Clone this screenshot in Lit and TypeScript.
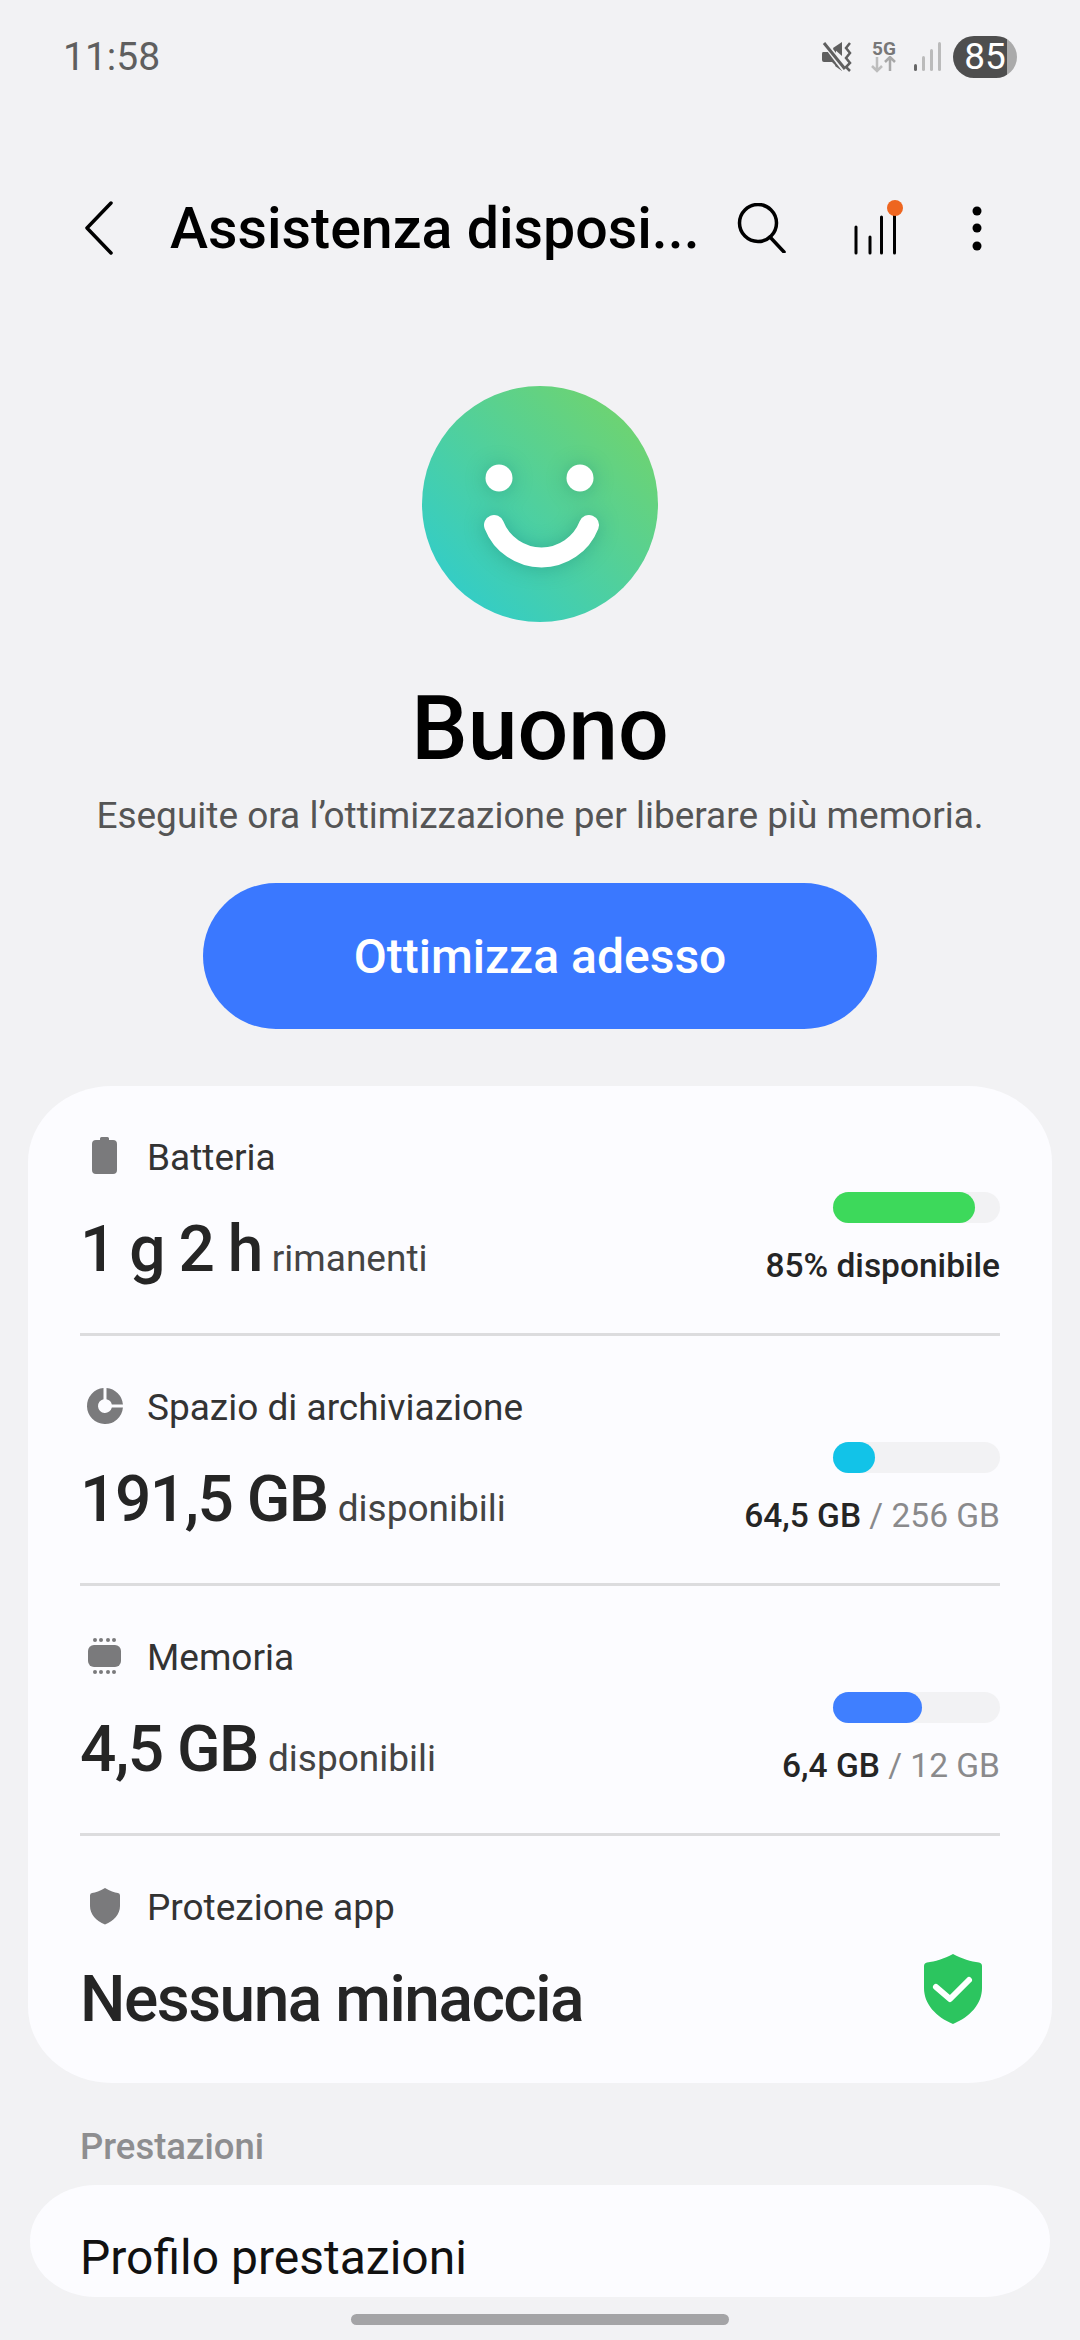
import { LitElement, css, html, svg } from 'lit';
import { customElement } from 'lit/decorators.js';

const icons = {
  battery: svg`<path d="M9 1.5Q9 0 10.500 0H16.500Q18 0 18 1.500V3H22Q26 3 26 7V33Q26 37 22 37H5Q1 37 1 33V7Q1 3 5 3H9Z" transform="translate(5 0)"/>`,
  pie: svg`<path d="M17.500 1.060A18 18 0 1 0 36.940 20.500H25.840A7 7 0 1 1 17.500 12.160Z"/><path d="M20.500 1.060A18 18 0 0 1 36.940 17.500H25.840A7 7 0 0 0 20.500 12.160Z"/>`,
  chip: svg`<rect x="2" y="8" width="33" height="22" rx="6"/><circle cx="9" cy="3" r="2"/><circle cx="15" cy="3" r="2"/><circle cx="22" cy="3" r="2"/><circle cx="28" cy="3" r="2"/><circle cx="9" cy="35" r="2"/><circle cx="15" cy="35" r="2"/><circle cx="22" cy="35" r="2"/><circle cx="28" cy="35" r="2"/>`,
  shield: svg`<path transform="translate(4 1)" d="M15 0C20 3 24.500 4.500 28 5Q30 5.300 30 7.500V18C30 26 24 33 15 36.500C6 33 0 26 0 18V7.500Q0 5.300 2 5C5.500 4.500 10 3 15 0Z"/>`,
};

const rows = [
  { icon: icons.battery, label: 'Batteria', value: '1 g 2 h', unit: 'rimanenti', pct: 85, color: '#3dd95b', used: '85% disponibile', total: '' },
  { icon: icons.pie, label: 'Spazio di archiviazione', value: '191,5 GB', unit: 'disponibili', pct: 25, color: '#12c3e8', used: '64,5 GB', total: ' / 256 GB' },
  { icon: icons.chip, label: 'Memoria', value: '4,5 GB', unit: 'disponibili', pct: 53, color: '#3f7fff', used: '6,4 GB', total: ' / 12 GB' },
];

@customElement('app-root')
export class AppRoot extends LitElement {
  static get styles() {
    return css`
      :host {
        display: flex;
        flex-direction: column;
        width: 1080px;
        height: 2340px;
        overflow: hidden;
        background: #f2f2f4;
        font-family: Roboto, sans-serif;
        color: #252525;
      }
      .status {
        display: flex;
        align-items: center;
        height: 42px;
        margin-top: 36px;
        padding: 0 63px;
        color: #5f5f5f;
        font-size: 39px;
      }
      .status-right {
        display: flex;
        align-items: center;
        margin-left: auto;
      }
      .net {
        display: flex;
        flex-direction: column;
        align-items: center;
        width: 30px;
        margin-left: 17px;
        color: #777;
        font-size: 19px;
        font-weight: 700;
        line-height: 14px;
      }
      .bars {
        margin-left: 15px;
      }
      .pill {
        width: 64px;
        height: 42px;
        border-radius: 21px;
        margin-left: 12px;
        background: linear-gradient(90deg, #4e4e4e 84%, #aaaaaa 84%);
        color: #fff;
        font-size: 37px;
        line-height: 42px;
        text-align: center;
      }
      .appbar {
        display: flex;
        align-items: center;
        height: 80px;
        margin-top: 110px;
        padding-left: 84px;
        color: #000;
      }
      .back {
        width: 30px;
        height: 54px;
      }
      .title {
        margin-left: 56px;
        width: 540px;
        font-size: 57.300px;
        font-weight: 500;
        white-space: nowrap;
      }
      .search {
        width: 50px;
        height: 50px;
        margin-left: 27px;
      }
      .signal {
        width: 50px;
        height: 56px;
        margin-left: 66px;
      }
      .dots {
        width: 14px;
        height: 56px;
        margin-left: 67px;
      }
      .hero {
        display: flex;
        flex-direction: column;
        align-items: center;
        padding-top: 118px;
      }
      .smile {
        display: block;
        width: 236px;
        height: 236px;
      }
      .face {
        filter: drop-shadow(0 1px 10px rgba(16, 120, 110, 0.38));
      }
      h1 {
        margin: 57px 0 0;
        font-size: 89.500px;
        font-weight: 500;
        line-height: 100px;
        color: #000;
      }
      .hint {
        margin-top: 12px;
        font-size: 37px;
        line-height: 50px;
        color: #555;
      }
      .cta {
        width: 674px;
        height: 146px;
        margin-top: 42px;
        border-radius: 73px;
        background: #3a78ff;
        color: #fff;
        font-size: 48px;
        font-weight: 500;
        line-height: 148px;
        text-align: center;
      }
      .card {
        margin: 57px 28px 0;
        padding: 0 52px;
        border-radius: 84px / 76px;
        background: #fcfcff;
      }
      .row {
        display: flex;
        justify-content: space-between;
        height: 250px;
        box-sizing: border-box;
        border-bottom: 3px solid #dcdcde;
        padding-top: 46px;
      }
      .row:last-child {
        height: 247px;
        border-bottom: 0;
      }
      .label {
        display: flex;
        align-items: center;
        height: 50px;
        font-size: 37px;
        color: #333;
      }
      .icon {
        width: 40px;
        height: 40px;
        margin-left: 6px;
        margin-right: 21px;
        fill: #7a7a7c;
      }
      .value {
        margin-top: 30px;
        line-height: 76px;
        font-size: 64px;
        font-weight: 500;
        letter-spacing: -1.500px;
        white-space: nowrap;
      }
      .unit {
        font-size: 37px;
        font-weight: 400;
        letter-spacing: 0;
        margin-left: 10px;
        color: #444;
      }
      .stats {
        display: flex;
        flex-direction: column;
        align-items: flex-end;
        padding-top: 60px;
      }
      .track {
        width: 167px;
        height: 31px;
        border-radius: 16px;
        background: #f2f2f4;
      }
      .fill {
        height: 100%;
        border-radius: 16px;
      }
      .caption {
        margin-top: 21px;
        font-size: 33.500px;
        font-weight: 500;
        line-height: 44px;
        white-space: nowrap;
      }
      .total {
        font-weight: 400;
        color: #8a8a8c;
      }
      .safe {
        width: 58px;
        height: 70px;
        margin: 72px 18px 0 0;
      }
      .section {
        margin: 43px 80px 0;
        height: 59px;
        font-size: 36.500px;
        font-weight: 500;
        line-height: 42px;
        color: #8e8e90;
      }
      .card2 {
        margin: 0 30px;
        height: 112px;
        padding: 43px 50px 0;
        box-sizing: border-box;
        border-radius: 66px / 56px;
        background: #fcfcff;
        font-size: 48px;
        line-height: 60px;
        color: #111;
        overflow: hidden;
      }
      .handle {
        width: 378px;
        height: 11px;
        margin: 17px auto 0;
        border-radius: 6px;
        background: #a4a4a6;
      }
    `;
  }

  render() {
    return html`
      <div class="status">
        <span>11:58</span>
        <div class="status-right">
          <svg width="30" height="30" viewBox="0 0 30 30">
            <path d="M1 10H6L12 6L14 8L14 24L10 20H2Q0 20 0 18V12Q0 10 1 10Z" fill="#5f5f5f"/>
            <path d="M11 6L20 0V14Z" fill="#5f5f5f"/>
            <path d="M15 20L20 25V29L13 24Z" fill="#5f5f5f"/>
            <path d="M2 0L23 28" stroke="#f2f2f4" stroke-width="6"/>
            <path d="M2 1L23 27" stroke="#5f5f5f" stroke-width="3"/>
            <path d="M28 1L24 6L28 11L24 16L28 21L24 25L28 29" fill="none" stroke="#5f5f5f" stroke-width="2.500"/>
          </svg>
          <div class="net">
            <span>5G</span>
            <svg width="26" height="17" viewBox="0 0 26 17">
              <path d="M6 1V15M1 10L6 15L11 10" fill="none" stroke="#bdbdbd" stroke-width="2.500"/>
              <path d="M19 15V1M14 6L19 1L24 6" fill="none" stroke="#a8a8a8" stroke-width="2.500"/>
            </svg>
          </div>
          <svg class="bars" width="27" height="30" viewBox="0 0 27 30">
            <rect x="0" y="22" width="3" height="7" rx="1.500" fill="#666"/>
            <rect x="8" y="14" width="3" height="15" rx="1.500" fill="#bbb"/>
            <rect x="16" y="7" width="3" height="22" rx="1.500" fill="#bbb"/>
            <rect x="24" y="0" width="3" height="29" rx="1.500" fill="#bbb"/>
          </svg>
          <div class="pill">85</div>
        </div>
      </div>

      <div class="appbar">
        <svg class="back" viewBox="0 0 30 54">
          <path d="M27 2L3 27L27 52" fill="none" stroke="#000" stroke-width="3.500" stroke-linecap="round" stroke-linejoin="round"/>
        </svg>
        <div class="title">Assistenza disposi...</div>
        <svg class="search" viewBox="0 0 50 50">
          <circle cx="21" cy="20" r="18.500" fill="none" stroke="#000" stroke-width="3.500"/>
          <path d="M33 34L47 49" stroke="#000" stroke-width="3.500" stroke-linecap="round"/>
        </svg>
        <svg class="signal" viewBox="0 0 50 56">
          <path d="M3 27V53M17 37V53M28.500 17V53M41.500 15V53" stroke="#000" stroke-width="3" stroke-linecap="round"/>
          <circle cx="42" cy="8" r="8" fill="#ee6620"/>
        </svg>
        <svg class="dots" viewBox="0 0 14 56">
          <circle cx="7" cy="11" r="4.500"/><circle cx="7" cy="28" r="4.500"/><circle cx="7" cy="46" r="4.500"/>
        </svg>
      </div>

      <div class="hero">
        <svg class="smile" viewBox="0 0 236 236">
          <defs>
            <linearGradient id="smile" x1="0.15" y1="0.85" x2="0.85" y2="0.15">
              <stop offset="0" stop-color="#35cdc4"/>
              <stop offset="1" stop-color="#6cd374"/>
            </linearGradient>
          </defs>
          <circle cx="118" cy="118" r="118" fill="url(#smile)"/>
          <g class="face">
            <circle cx="77" cy="92" r="13.500" fill="#fff"/>
            <circle cx="158" cy="92" r="13.500" fill="#fff"/>
            <path d="M72 139A51 51 0 0 0 167 139" fill="none" stroke="#fff" stroke-width="20" stroke-linecap="round"/>
          </g>
        </svg>
        <h1>Buono</h1>
        <div class="hint">Eseguite ora l’ottimizzazione per liberare più memoria.</div>
        <div class="cta">Ottimizza adesso</div>
      </div>

      <div class="card">
        ${rows.map(
          (r) => html`
            <div class="row">
              <div>
                <div class="label"><svg class="icon" viewBox="0 0 40 40">${r.icon}</svg>${r.label}</div>
                <div class="value">${r.value}<span class="unit">${r.unit}</span></div>
              </div>
              <div class="stats">
                <div class="track"><div class="fill" style="width:${r.pct}%;background:${r.color}"></div></div>
                <div class="caption">${r.used}<span class="total">${r.total}</span></div>
              </div>
            </div>
          `
        )}
        <div class="row">
          <div>
            <div class="label"><svg class="icon" viewBox="0 0 40 40">${icons.shield}</svg>Protezione app</div>
            <div class="value">Nessuna minaccia</div>
          </div>
          <svg class="safe" viewBox="0 0 58 70">
            <path d="M29 0C38 5 47 7.500 55 8.500Q58 9 58 12V34C58 50 46 63 29 70C12 63 0 50 0 34V12Q0 9 3 8.500C11 7.500 20 5 29 0Z" fill="#2cc55f"/>
            <path d="M12 33L26 45L45 26" fill="none" stroke="#fff" stroke-width="6" stroke-linecap="round" stroke-linejoin="round"/>
          </svg>
        </div>
      </div>

      <div class="section">Prestazioni</div>
      <div class="card2">Profilo prestazioni</div>
      <div class="handle"></div>
    `;
  }
}
